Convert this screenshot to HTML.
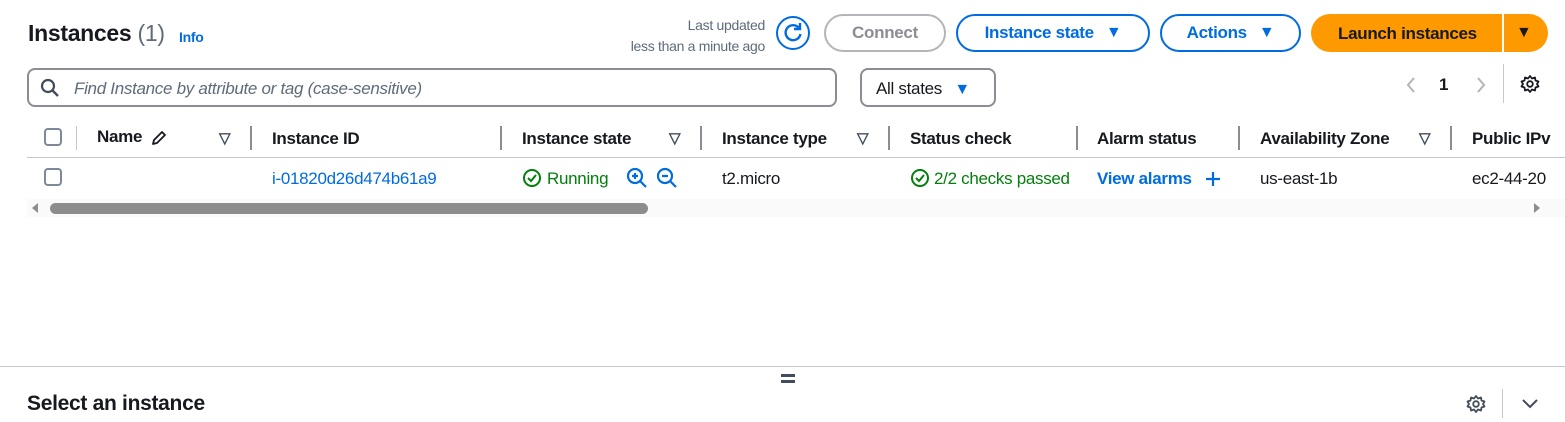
<!DOCTYPE html>
<html><head><meta charset="utf-8">
<style>
*{box-sizing:border-box;margin:0;padding:0}
body{width:1565px;height:422px;background:#fff;font-family:"Liberation Sans",sans-serif;color:#16191f;position:relative;overflow:hidden;letter-spacing:-0.3px}
.a{position:absolute;white-space:nowrap}
.btn{position:absolute;height:38px;border:2px solid #006ce0;border-radius:20px;color:#006ce0;font-weight:bold;font-size:17px;display:flex;align-items:center;justify-content:center}
.btn span{font-size:16px;margin-left:12px}
.hd{position:absolute;top:129px;font-weight:bold;font-size:17px}
.sep{position:absolute;top:126px;width:2px;height:24px;background:#8c8c94}
.tri{position:absolute;top:129px;font-size:15px;font-weight:bold;color:#414d5c}
.cb{position:absolute;width:18px;height:18px;border:2px solid #7d8998;border-radius:4px}
.td{position:absolute;top:169px;font-size:17px}
</style></head><body>
<div class="a" style="left:28px;top:20px;font-size:23px;font-weight:bold">Instances <span style="font-weight:normal;color:#5f6b7a">(1)</span></div>
<div class="a" style="left:179px;top:29px;font-size:14px;font-weight:bold;color:#006ce0">Info</div>
<div class="a" style="left:600px;top:15px;width:165px;text-align:right;font-size:14px;color:#5f6b7a;line-height:21px">Last updated<br>less than a minute ago</div>
<svg class="a" style="left:775px;top:15px" width="36" height="36" viewBox="0 0 36 36"><circle cx="18" cy="18" r="16" fill="none" stroke="#006ce0" stroke-width="2"/><path d="M24 13 A7.5 7.5 0 1 0 25.5 19" fill="none" stroke="#006ce0" stroke-width="2.4"/><path d="M25 8 L25 14 L19 14" fill="none" stroke="#006ce0" stroke-width="2.4"/></svg>
<div class="btn" style="left:824px;top:14px;width:122px;border-color:#b4b4bb;color:#8c8c94">Connect</div>
<div class="btn" style="left:956px;top:14px;width:194px">Instance state<span>▼</span></div>
<div class="btn" style="left:1160px;top:14px;width:141px">Actions<span>▼</span></div>
<div class="a" style="left:1311px;top:14px;width:237px;height:38px;border-radius:20px;background:#ff9900"></div>
<div class="a" style="left:1338px;top:24px;font-size:17px;font-weight:bold">Launch instances</div>
<div class="a" style="left:1502px;top:14px;width:2px;height:38px;background:#fff"></div>
<div class="a" style="left:1516px;top:24px;font-size:16px">▼</div>
<div class="a" style="left:27px;top:68px;width:810px;height:39px;border:2px solid #8c8c94;border-radius:8px"></div>
<svg class="a" style="left:40px;top:78px" width="20" height="20" viewBox="0 0 20 20"><circle cx="8" cy="8" r="6" fill="none" stroke="#414d5c" stroke-width="2.2"/><path d="M12.5 12.5 L18 18" stroke="#414d5c" stroke-width="2.4"/></svg>
<div class="a" style="left:74px;top:79px;font-size:17px;font-style:italic;color:#5f6b7a">Find Instance by attribute or tag (case-sensitive)</div>
<div class="a" style="left:860px;top:68px;width:136px;height:39px;border:2px solid #8c8c94;border-radius:8px"></div>
<div class="a" style="left:876px;top:79px;font-size:17px">All states <span style="color:#006ce0;font-size:16px;margin-left:8px">▼</span></div>
<svg class="a" style="left:1405px;top:76px" width="12" height="18" viewBox="0 0 12 18"><path d="M9 2 L3 9 L9 16" fill="none" stroke="#b4b4bb" stroke-width="2"/></svg>
<div class="a" style="left:1439px;top:75px;font-size:17px;font-weight:bold">1</div>
<svg class="a" style="left:1475px;top:76px" width="12" height="18" viewBox="0 0 12 18"><path d="M3 2 L9 9 L3 16" fill="none" stroke="#b4b4bb" stroke-width="2"/></svg>
<div class="a" style="left:1503px;top:64px;width:1px;height:39px;background:#c6c6cd"></div>
<svg class="a" style="left:1520px;top:74px" width="20" height="20" viewBox="0 0 20 20"><path d="M10 2 l2 2.5 3-1 .5 3 3 1 -1.5 2.5 1.5 2.5 -3 1 -.5 3 -3 -1 -2 2.5 -2-2.5 -3 1 -.5-3 -3-1 1.5-2.5 -1.5-2.5 3-1 .5-3 3 1z" fill="none" stroke="#16191f" stroke-width="1.8" stroke-linejoin="round"/><circle cx="10" cy="10" r="2.8" fill="none" stroke="#16191f" stroke-width="1.8"/></svg>
<div class="cb" style="left:44px;top:128px"></div>
<div class="a" style="left:76px;top:126px;width:1px;height:24px;background:#c6c6cd"></div>
<div class="hd" style="left:97px;top:127px">Name</div>
<svg class="a" style="left:150px;top:129px" width="18" height="18" viewBox="0 0 18 18"><path d="M3 15 L4 11 L12 3 L15 6 L7 14 Z" fill="none" stroke="#16191f" stroke-width="1.8" stroke-linejoin="round"/></svg>
<div class="tri" style="left:219px">▽</div>
<div class="sep" style="left:250px"></div>
<div class="hd" style="left:272px">Instance ID</div>
<div class="sep" style="left:500px"></div>
<div class="hd" style="left:522px">Instance state</div>
<div class="tri" style="left:669px">▽</div>
<div class="sep" style="left:700px"></div>
<div class="hd" style="left:722px">Instance type</div>
<div class="tri" style="left:857px">▽</div>
<div class="sep" style="left:888px"></div>
<div class="hd" style="left:910px">Status check</div>
<div class="sep" style="left:1076px"></div>
<div class="hd" style="left:1097px">Alarm status</div>
<div class="sep" style="left:1238px"></div>
<div class="hd" style="left:1260px">Availability Zone</div>
<div class="tri" style="left:1419px">▽</div>
<div class="sep" style="left:1450px"></div>
<div class="hd" style="left:1472px">Public IPv</div>
<div class="a" style="left:27px;top:157px;width:1538px;height:1px;background:#c6c6cd"></div>
<div class="cb" style="left:44px;top:168px"></div>
<div class="td" style="left:272px;color:#006ce0">i-01820d26d474b61a9</div>
<svg class="a" style="left:522px;top:168px" width="20" height="20" viewBox="0 0 20 20"><circle cx="10" cy="10" r="8" fill="none" stroke="#037f0c" stroke-width="2"/><path d="M6 10 L9 13 L14 7" fill="none" stroke="#037f0c" stroke-width="2"/></svg>
<div class="td" style="left:547px;color:#037f0c">Running</div>
<svg class="a" style="left:626px;top:167px" width="22" height="22" viewBox="0 0 22 22"><circle cx="9" cy="9" r="7" fill="none" stroke="#006ce0" stroke-width="2.2"/><path d="M14 14 L20 20 M6 9 H12 M9 6 V12" stroke="#006ce0" stroke-width="2.2"/></svg>
<svg class="a" style="left:656px;top:167px" width="22" height="22" viewBox="0 0 22 22"><circle cx="9" cy="9" r="7" fill="none" stroke="#006ce0" stroke-width="2.2"/><path d="M14 14 L20 20 M6 9 H12" stroke="#006ce0" stroke-width="2.2"/></svg>
<div class="td" style="left:722px">t2.micro</div>
<svg class="a" style="left:910px;top:168px" width="20" height="20" viewBox="0 0 20 20"><circle cx="10" cy="10" r="8" fill="none" stroke="#037f0c" stroke-width="2"/><path d="M6 10 L9 13 L14 7" fill="none" stroke="#037f0c" stroke-width="2"/></svg>
<div class="td" style="left:934px;color:#037f0c;width:143px;overflow:hidden">2/2 checks passed</div>
<div class="td" style="left:1097px;color:#006ce0;font-weight:bold">View alarms</div>
<svg class="a" style="left:1204px;top:170px" width="18" height="18" viewBox="0 0 18 18"><path d="M9 2 V16 M2 9 H16" stroke="#006ce0" stroke-width="2.2"/></svg>
<div class="td" style="left:1260px">us-east-1b</div>
<div class="td" style="left:1472px;width:93px;overflow:hidden">ec2-44-20</div>
<div class="a" style="left:27px;top:199px;width:1538px;height:18px;background:#fafafa"></div>
<div class="a" style="left:32px;top:203px;width:0;height:0;border-top:5px solid transparent;border-bottom:5px solid transparent;border-right:6px solid #8c8c94"></div>
<div class="a" style="left:50px;top:203px;width:598px;height:11px;border-radius:6px;background:#8c8c8c"></div>
<div class="a" style="left:1534px;top:203px;width:0;height:0;border-top:5px solid transparent;border-bottom:5px solid transparent;border-left:6px solid #8c8c94"></div>
<div class="a" style="left:0;top:366px;width:1565px;height:1px;background:#c6c6cd"></div>
<div class="a" style="left:781px;top:374px;width:14px;height:3px;background:#414d5c"></div>
<div class="a" style="left:781px;top:380px;width:14px;height:3px;background:#414d5c"></div>
<div class="a" style="left:27px;top:392px;font-size:21px;font-weight:bold">Select an instance</div>
<svg class="a" style="left:1466px;top:394px" width="20" height="20" viewBox="0 0 20 20"><path d="M10 2 l2 2.5 3-1 .5 3 3 1 -1.5 2.5 1.5 2.5 -3 1 -.5 3 -3 -1 -2 2.5 -2-2.5 -3 1 -.5-3 -3-1 1.5-2.5 -1.5-2.5 3-1 .5-3 3 1z" fill="none" stroke="#414d5c" stroke-width="1.8" stroke-linejoin="round"/><circle cx="10" cy="10" r="2.8" fill="none" stroke="#414d5c" stroke-width="1.8"/></svg>
<div class="a" style="left:1502px;top:389px;width:1px;height:29px;background:#c6c6cd"></div>
<svg class="a" style="left:1521px;top:398px" width="18" height="12" viewBox="0 0 18 12"><path d="M2 2 L9 9 L16 2" fill="none" stroke="#414d5c" stroke-width="2"/></svg>
</body></html>
